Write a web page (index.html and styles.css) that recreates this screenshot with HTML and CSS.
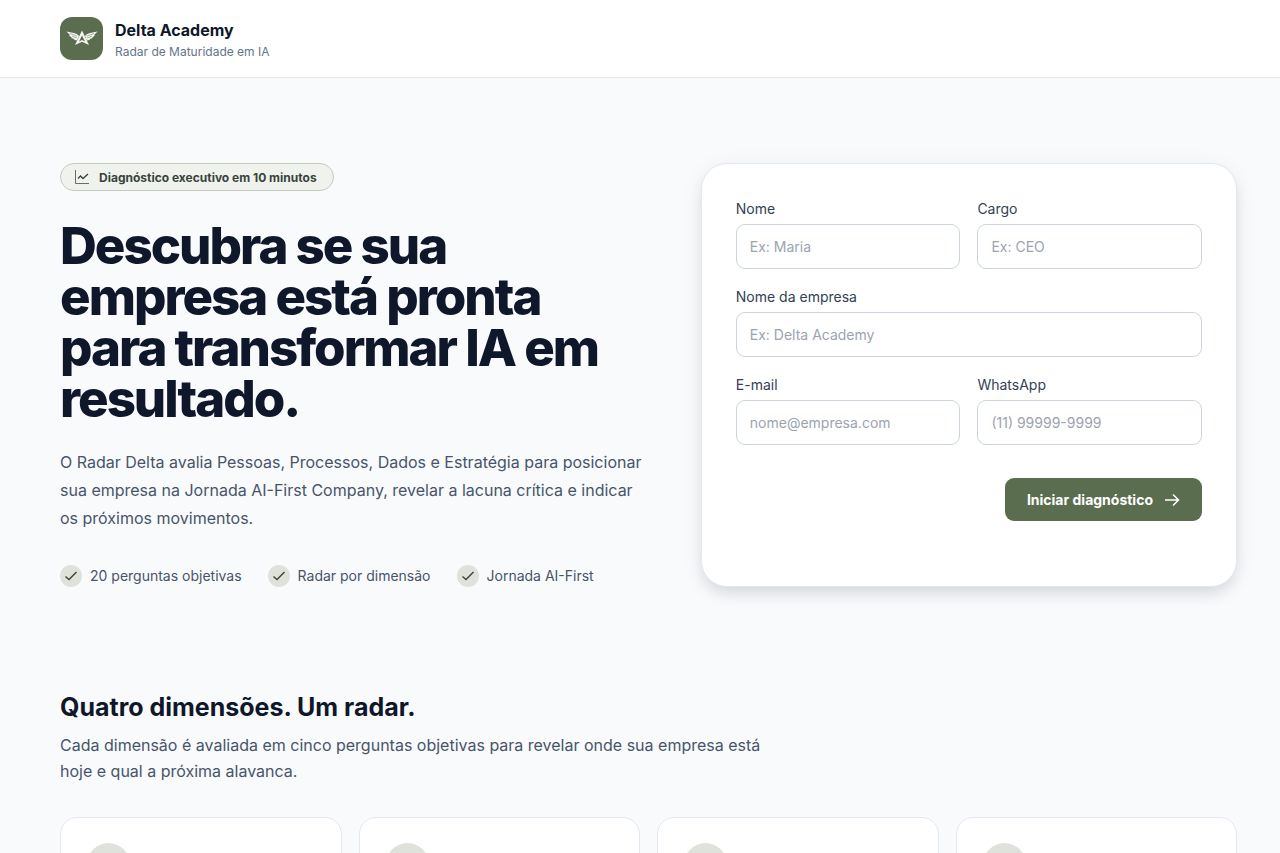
FILE: index.html
```html
<!DOCTYPE html>
<html lang="pt-BR">
<head>
    <meta charset="UTF-8">
    <meta name="viewport" content="width=device-width, initial-scale=1">
    <title>Delta Academy - Radar de Maturidade em IA</title>
    <link rel="stylesheet" href="styles.css">
</head>
<body>
    <header class="header">
        <div class="logo">
            <svg width="32" height="16" viewBox="0 0 32 16" fill="#f4f6f1">
                <path d="M.5 1.500 L8 3 Q12 4 13 6 L11 10.500 L8 9.800 L8.500 9 L5 8 L5.800 7.200 L3 5.800 L4 5 Z"/>
                <path d="M31.500 1.500 L24 3 Q20 4 19 6 L21 10.500 L24 9.800 L23.500 9 L27 8 L26.200 7.200 L29 5.800 L28 5 Z"/>
                <path d="M4 3.500 L11 6 M6 6 L11 8 M28 3.500 L21 6 M26 6 L21 8" stroke="#5b6d4f" stroke-width=".5"/>
                <path d="M16 .5 L23 15 L16 11.800 L9 15 Z M16 5.500 L13 11.500 L16 10 L19 11.500 Z" fill-rule="evenodd"/>
            </svg>
        </div>
        <div class="brand-text">
            <div class="brand">Delta Academy</div>
            <div class="tagline">Radar de Maturidade em IA</div>
        </div>
    </header>

    <main>
        <section class="hero">
            <div class="intro">
                <div class="badge">
                    <svg width="16" height="16" viewBox="0 0 16 16" fill="none" stroke="currentColor">
                        <path d="M1.500 1v13.500H15" opacity=".75"/>
                        <path d="M4 9.500 L6.500 7 L9 9.500 L14 5" stroke-width="1.300"/>
                    </svg>
                    Diagnóstico executivo em 10 minutos
                </div>
                <h1>Descubra se sua empresa está pronta para transformar IA em resultado.</h1>
                <p class="lead">O Radar Delta avalia Pessoas, Processos, Dados e Estratégia para posicionar sua empresa na Jornada AI-First Company, revelar a lacuna crítica e indicar os próximos movimentos.</p>
                <ul class="checks">
                    <li><span class="tick"><svg width="12" height="10" viewBox="0 0 12 10"><path d="M.5 5.500 L4 8.500 L11.500 1"/></svg></span>20 perguntas objetivas</li>
                    <li><span class="tick"><svg width="12" height="10" viewBox="0 0 12 10"><path d="M.5 5.500 L4 8.500 L11.500 1"/></svg></span>Radar por dimensão</li>
                    <li><span class="tick"><svg width="12" height="10" viewBox="0 0 12 10"><path d="M.5 5.500 L4 8.500 L11.500 1"/></svg></span>Jornada AI-First</li>
                </ul>
            </div>

            <form class="card">
                <div class="field">
                    <label for="nome">Nome</label>
                    <input type="text" id="nome" placeholder="Ex: Maria">
                </div>
                <div class="field">
                    <label for="cargo">Cargo</label>
                    <input type="text" id="cargo" placeholder="Ex: CEO">
                </div>
                <div class="field wide">
                    <label for="empresa">Nome da empresa</label>
                    <input type="text" id="empresa" placeholder="Ex: Delta Academy">
                </div>
                <div class="field">
                    <label for="email">E-mail</label>
                    <input type="email" id="email" placeholder="nome@empresa.com">
                </div>
                <div class="field">
                    <label for="whatsapp">WhatsApp</label>
                    <input type="tel" id="whatsapp" placeholder="(11) 99999-9999">
                </div>
                <div class="actions">
                    <button type="button">
                        Iniciar diagnóstico
                        <svg width="16" height="16" viewBox="0 0 16 16" fill="none" stroke="currentColor" stroke-width="1.500"><path d="M1 8H14.500M9 2.500L14.500 8L9 13.500"/></svg>
                    </button>
                </div>
            </form>
        </section>

        <section class="dimensions">
            <h2>Quatro dimensões. Um radar.</h2>
            <p>Cada dimensão é avaliada em cinco perguntas objetivas para revelar onde sua empresa está hoje e qual a próxima alavanca.</p>
            <div class="dimension-grid">
                <div class="dimension"><div class="dot"></div></div>
                <div class="dimension"><div class="dot"></div></div>
                <div class="dimension"><div class="dot"></div></div>
                <div class="dimension"><div class="dot"></div></div>
            </div>
        </section>
    </main>
</body>
</html>
```
FILE: styles.css
```css
* {
    box-sizing: border-box;
}
body {
    margin: 0;
    background: #f9fafc;
    color: #0f172a;
    font-family: Inter, sans-serif;
    font-size: 14px;
}
h1, h2, p, ul {
    margin: 0;
    padding: 0;
}

.header {
    display: flex;
    align-items: center;
    gap: 12px;
    height: 78px;
    padding: 0 43px 1px 60px;
    background: #fff;
    border-bottom: 1px solid #e5e9ee;
}
.logo {
    display: flex;
    align-items: center;
    justify-content: center;
    width: 43px;
    height: 43px;
    border-radius: 12px;
    background: #5b6d4f;
}
.brand-text {
    padding-top: 6px;
}
.brand {
    font-size: 16px;
    font-weight: 700;
    line-height: 22px;
}
.tagline {
    color: #64748b;
    font-size: 12px;
    line-height: 22px;
}

main {
    padding: 85px 43px 0 60px;
}
.hero {
    display: grid;
    grid-template-columns: 11fr 10fr;
    gap: 51px;
}
.badge {
    display: inline-flex;
    align-items: center;
    gap: 9px;
    height: 28px;
    padding: 0 16px 0 13px;
    border: 1px solid #c4cbbb;
    border-radius: 14px;
    background: #f0f2ed;
    color: #38443b;
    font-size: 12px;
    font-weight: 700;
}
h1 {
    margin-top: 29px;
    max-width: 580px;
    font-size: 51px;
    font-weight: 800;
    line-height: 51px;
    letter-spacing: -2px;
}
.lead {
    margin-top: 24px;
    color: #475569;
    font-size: 16px;
    line-height: 28px;
}
.checks {
    display: flex;
    gap: 26px;
    margin-top: 33px;
    list-style: none;
    color: #475569;
}
.checks li {
    display: flex;
    align-items: center;
    gap: 8px;
    line-height: 22px;
    white-space: nowrap;
}
.tick {
    display: flex;
    align-items: center;
    justify-content: center;
    width: 22px;
    height: 22px;
    border-radius: 50%;
    background: #dfe2da;
}
.tick path {
    fill: none;
    stroke: #38443b;
    stroke-width: 1.4;
}

.card {
    display: grid;
    grid-template-columns: 1fr 1fr;
    align-content: start;
    gap: 17px;
    padding: 34px;
    border: 1px solid #e2e8f0;
    border-radius: 26px;
    background: #fff;
    box-shadow: 0 8px 16px -4px rgba(15, 23, 42, .14), 0 4px 24px rgba(15, 23, 42, .05);
}
.wide, .actions {
    grid-column: 1 / -1;
}
.field label {
    display: block;
    margin-bottom: 4px;
    color: #334155;
    line-height: 22px;
}
.field input {
    display: block;
    width: 100%;
    height: 45px;
    padding: 0 13px;
    border: 1px solid #cbd5e1;
    border-radius: 9px;
    background: #fff;
    color: #0f172a;
    font: inherit;
}
.field input::placeholder {
    color: #9ca3af;
}
.actions {
    display: flex;
    justify-content: flex-end;
    margin-top: 16px;
}
.actions button {
    display: flex;
    align-items: center;
    gap: 11px;
    height: 43px;
    padding: 0 22px;
    border: 0;
    border-radius: 9px;
    background: #5b6d4f;
    color: #fff;
    font: inherit;
    font-weight: 700;
}

.dimensions {
    padding-top: 103px;
}
.dimensions h2 {
    font-size: 25px;
    font-weight: 700;
    line-height: 34px;
}
.dimensions p {
    max-width: 718px;
    margin-top: 8px;
    color: #475569;
    font-size: 16px;
    line-height: 26px;
}
.dimension-grid {
    display: grid;
    grid-template-columns: repeat(4, 1fr);
    gap: 17px;
    margin-top: 33px;
}
.dimension {
    padding: 25px 26px;
    border: 1px solid #e2e8f0;
    border-radius: 17px;
    background: #fff;
}
.dot {
    width: 43px;
    height: 43px;
    border-radius: 50%;
    background: #dfe2da;
}
```
